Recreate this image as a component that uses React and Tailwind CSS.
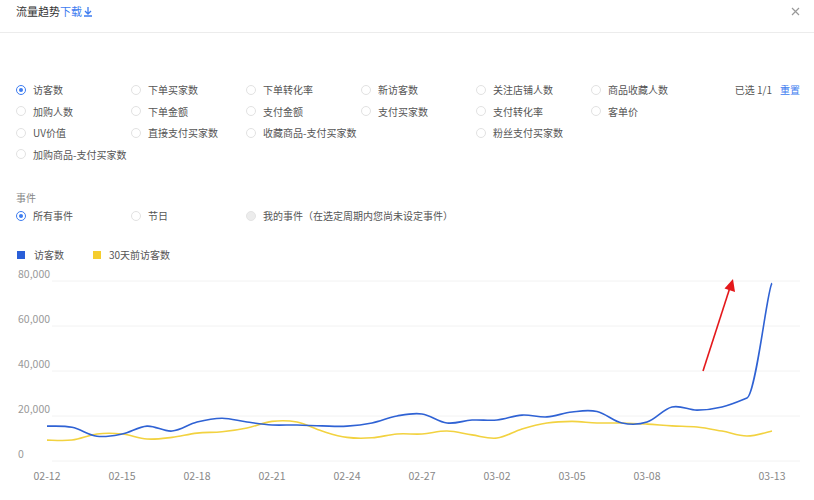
import React from 'react'

const FONT = { fontFamily: '"Noto Sans CJK SC", "Liberation Sans", sans-serif' }

const metricRows = [
  [['访客数', 1, true], ['下单买家数', 1], ['下单转化率', 1], ['新访客数', 1], ['关注店铺人数', 1], ['商品收藏人数', 1]],
  [['加购人数', 1], ['下单金额', 1], ['支付金额', 1], ['支付买家数', 1], ['支付转化率', 1], ['客单价', 1]],
  [['UV价值', 1], ['直接支付买家数', 1], ['收藏商品-支付买家数', 2], ['粉丝支付买家数', 1]],
  [['加购商品-支付买家数', 1]],
]

const blue = [15.5, 15, 11, 12, 15.5, 13.3, 17.3, 19, 17.3, 16, 16, 15.6, 15.5, 16.9, 20, 20.9, 16.9, 18.2, 18.2, 20.4, 19.6, 21.8, 22, 16.9, 17.3, 24, 22.6, 24, 28, 79]
const yellow = [9.3, 9.3, 12, 12, 9.8, 10.5, 12.4, 13, 14.7, 17.6, 17.3, 13.3, 10.5, 10.3, 12, 12, 13.3, 11.6, 10.2, 14.2, 16.9, 17.6, 16.9, 16.9, 16.4, 15.6, 15.1, 13.3, 11.1, 13.3]

const px = d => 47 + d * 25
const py = v => 462 - (v / 20) * 45

// catmull-rom -> bezier, tension dropped near the spike so it doesn't dip
function smoothPath(data) {
  const pts = data.map((v, i) => [px(i), py(v)])
  let d = `M${pts[0][0]},${pts[0][1]}`
  for (let i = 0; i < pts.length - 1; i++) {
    const p0 = pts[i - 1] || pts[i]
    const p1 = pts[i]
    const p2 = pts[i + 1]
    const p3 = pts[i + 2] || p2
    const big = Math.abs(p3[1] - p1[1]) > 60
    const t1 = Math.abs(p2[1] - p0[1]) > 60 ? 0.03 : 0.18
    const t2 = big ? 0.03 : 0.18
    const c1 = [p1[0] + (p2[0] - p0[0]) * 0.18, p1[1] + (p2[1] - p0[1]) * t1]
    const c2 = [p2[0] - (p3[0] - p1[0]) * 0.18, p2[1] - (p3[1] - p1[1]) * t2]
    d += ` C${c1[0].toFixed(1)},${c1[1].toFixed(1)} ${c2[0].toFixed(1)},${c2[1].toFixed(1)} ${p2[0]},${p2[1]}`
  }
  return d
}

function Radio({ checked, disabled }) {
  if (checked) {
    return (
      <span className="w-[10px] h-[10px] rounded-full border border-[#3d7cf0] flex items-center justify-center shrink-0">
        <span className="w-[4px] h-[4px] rounded-full bg-[#3d7cf0]" />
      </span>
    )
  }
  if (disabled) return <span className="w-[10px] h-[10px] rounded-full bg-[#ececec] border border-[#e4e4e4] shrink-0" />
  return <span className="w-[10px] h-[10px] rounded-full border border-[#e2e2e2] shrink-0" />
}

function Option({ label, span, checked, first }) {
  return (
    <div className={`flex items-center gap-[7px] h-[21.5px] whitespace-nowrap ${span === 2 ? 'col-span-2' : ''} ${first ? 'col-start-1' : ''}`}>
      <Radio checked={checked} />
      <span className="text-[10px] text-[#555]">{label}</span>
    </div>
  )
}

export default function App() {
  const ticks = [0, 3, 6, 9, 12, 15, 18, 21, 24, 29]
  const tickLabels = ['02-12', '02-15', '02-18', '02-21', '02-24', '02-27', '03-02', '03-05', '03-08', '03-13']

  return (
    <div className="w-[814px] h-[500px] bg-white overflow-hidden" style={FONT}>
      <div className="h-[33px] border-b border-[#ececec] flex items-start justify-between pl-[16px] pr-[14px] pt-[3px]">
        <div className="flex items-center text-[11px] leading-[16px]">
          <span className="text-[#333]">流量趋势</span>
          <span className="text-[#3d7cf0]">下载</span>
          <svg width="10" height="11" viewBox="0 0 10 11" className="ml-[1px]">
            <path d="M5 1v7M2 5l3 3 3-3M1 10h8" fill="none" stroke="#3d7cf0" strokeWidth="1.3" />
          </svg>
        </div>
        <svg width="9" height="9" viewBox="0 0 9 9" className="mt-[4px]">
          <path d="M1 1l7 7M8 1l-7 7" stroke="#999" strokeWidth="1.2" />
        </svg>
      </div>

      <div className="flex justify-between pl-[16px] pr-[14px] pt-[46px]">
        <div className="grid grid-cols-[repeat(6,115px)]">
          {metricRows.map((row, ri) =>
            row.map(([label, span, checked], ci) => (
              <Option key={label} label={label} span={span} checked={checked} first={ci === 0} />
            ))
          )}
        </div>
        <div className="flex items-center h-[21.5px] text-[10px] gap-[8px]">
          <span className="text-[#555]">已选 1/1</span>
          <span className="text-[#3d7cf0]">重置</span>
        </div>
      </div>

      <div className="pl-[16px] pt-[26px] text-[10px] text-[#888] leading-[14px]">事件</div>
      <div className="pl-[16px] grid grid-cols-[repeat(3,115px)]">
        <Option label="所有事件" checked />
        <Option label="节日" />
        <div className="flex items-center gap-[7px] h-[21.5px] whitespace-nowrap">
          <Radio disabled />
          <span className="text-[10px] text-[#555]">我的事件（在选定周期内您尚未设定事件）</span>
        </div>
      </div>

      <div className="flex items-center pl-[17px] pt-[16px] text-[10px] text-[#555] h-[40px]">
        <span className="w-[8px] h-[8px] bg-[#2a5fd8]" />
        <span className="ml-[9px]">访客数</span>
        <span className="w-[8px] h-[8px] bg-[#f5cd2e] ml-[29px]" />
        <span className="ml-[8px]">30天前访客数</span>
      </div>

      <svg width="814" height="232" viewBox="0 268 814 232" className="block">
        {[80000, 60000, 40000, 20000, 0].map((v, i) => {
          const y = 282 + i * 45
          return (
            <g key={v}>
              <line x1="52" x2="800" y1={y} y2={y} stroke="#f2f2f2" strokeWidth="1" />
              <text x="18" y={y - 3} fontSize="10.5" fill="#999">{v.toLocaleString('en-US')}</text>
            </g>
          )
        })}
        {ticks.map((d, i) => (
          <text key={d} x={px(d)} y="481" fontSize="10.5" fill="#888" textAnchor="middle">{tickLabels[i]}</text>
        ))}
        <path d={smoothPath(yellow)} fill="none" stroke="#f2d240" strokeWidth="1.6" />
        <path d={smoothPath(blue)} fill="none" stroke="#2f62d4" strokeWidth="1.6" />
        <line x1="703" y1="372" x2="729.5" y2="290" stroke="#e4181b" strokeWidth="1.6" />
        <polygon points="733,280 735,293 724.5,289.5" fill="#e4181b" />
      </svg>
    </div>
  )
}
